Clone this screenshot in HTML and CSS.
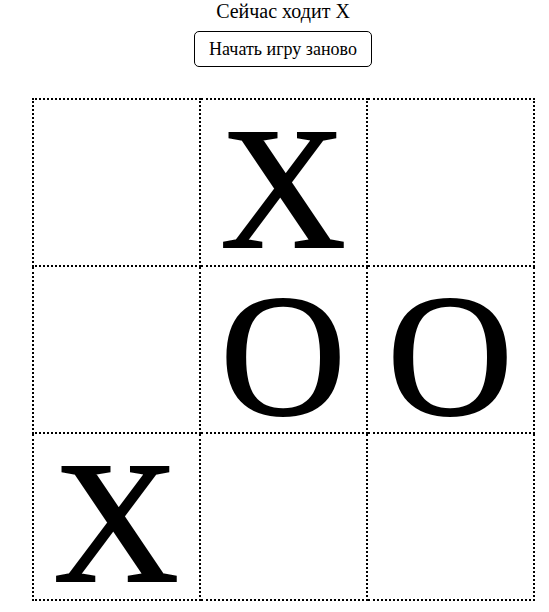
FILE: index.html
```html
<!DOCTYPE html>
<html lang="ru">
<head>
<meta charset="utf-8">
<title>Крестики-нолики</title>
<link rel="stylesheet" href="styles.css">
</head>
<body>
<div class="game">
  <div class="status">Сейчас ходит X</div>
  <button class="restart">Начать игру заново</button>
  <table class="board">
    <tr><td class="cell"></td><td class="cell">X</td><td class="cell"></td></tr>
    <tr><td class="cell"></td><td class="cell">O</td><td class="cell">O</td></tr>
    <tr><td class="cell">X</td><td class="cell"></td><td class="cell"></td></tr>
  </table>
</div>
</body>
</html>
```
FILE: styles.css
```css
html { overflow: hidden; }
body {
  margin: 0 8px;
  font-family: "Liberation Serif", "Times New Roman", serif;
  color: #000;
  background: #fff;
}
.game {
  width: 550px;
  display: flex;
  flex-direction: column;
  align-items: center;
}
.status {
  font-size: 20px;
  line-height: 23px;
}
.restart {
  margin-top: 8px;
  font-family: "Liberation Serif", "Times New Roman", serif;
  font-size: 18px;
  line-height: 20px;
  padding: 7px 14px;
  background: #fff;
  color: #000;
  border: 1px solid #000;
  border-radius: 5px;
}
.board {
  margin-top: 31px;
  border-collapse: collapse;
  border: 1px dotted #000;
}
.cell {
  width: 165px;
  height: 153px;
  padding: 12px 0 0;
  border: 2px dotted #000;
  text-align: center;
  vertical-align: middle;
  font-size: 174px;
  line-height: 153px;
  -webkit-text-stroke: 2px #000;
}
```
